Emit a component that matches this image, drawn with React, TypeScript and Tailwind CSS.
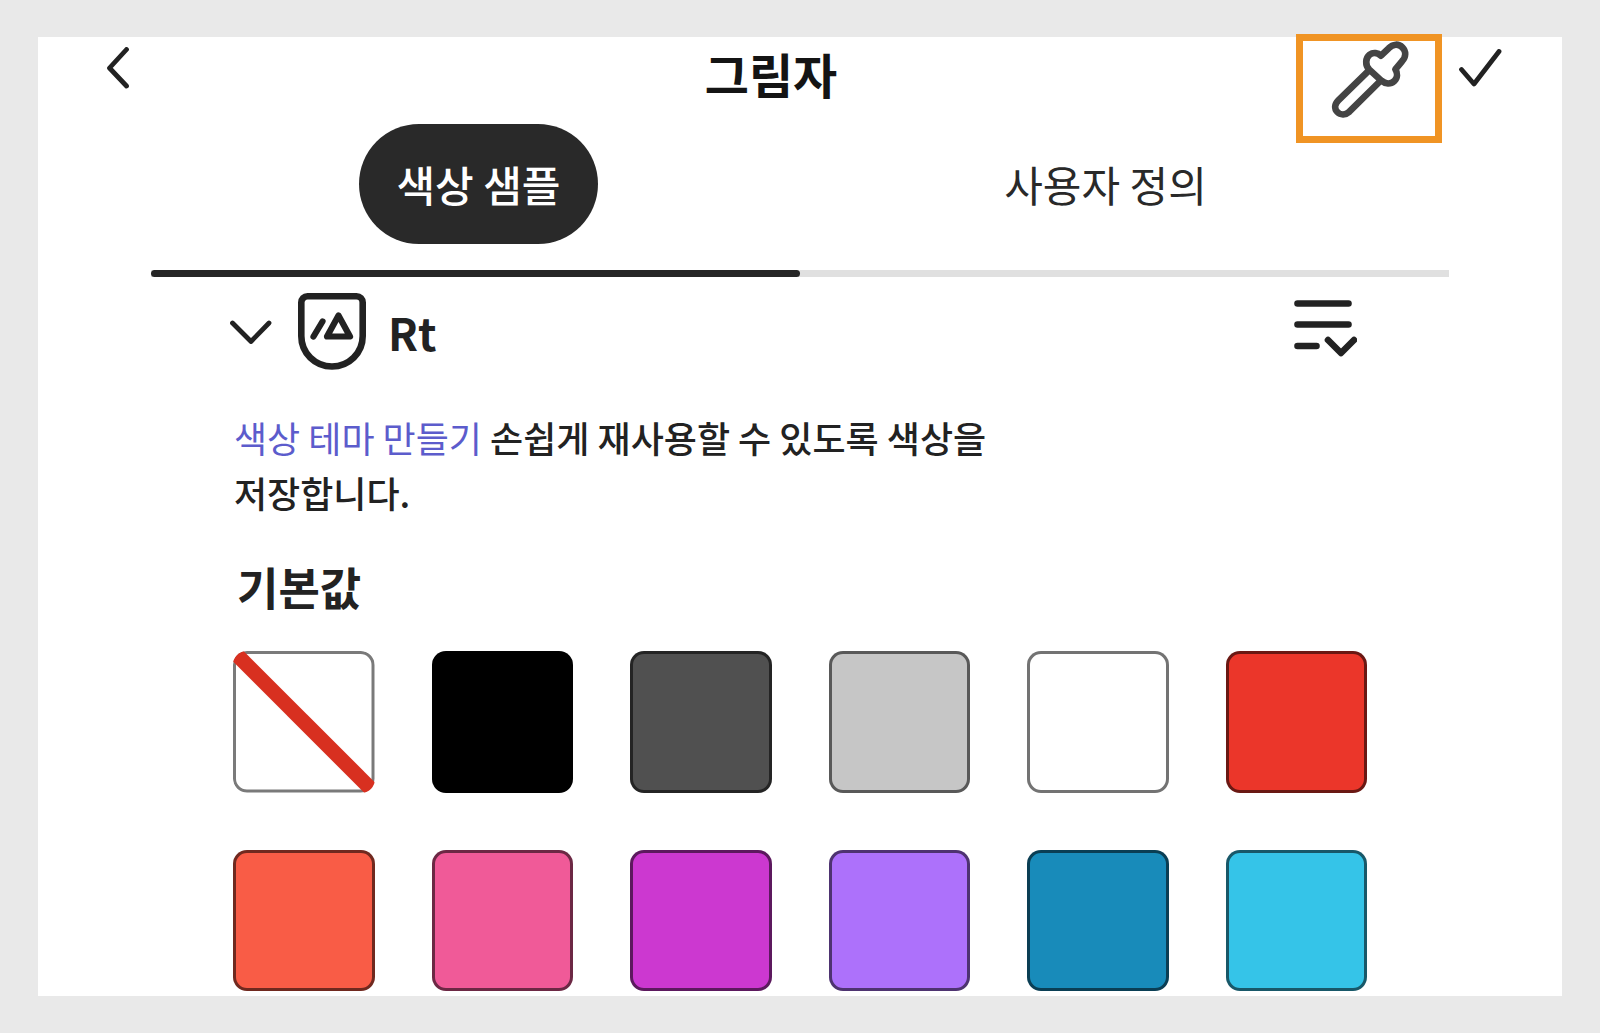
import React, { useState } from 'react';

type Swatch = {
  name: string;
  color: string;
};

type Tab = {
  id: string;
  label: string;
};

const TABS: Tab[] = [
  { id: 'swatches', label: '색상 샘플' },
  { id: 'custom', label: '사용자 정의' }
];

const SWATCHES: Swatch[] = [
  { name: '없음', color: '' },
  { name: '검정', color: 'bg-black' },
  { name: '진한 회색', color: 'bg-[#505050]' },
  { name: '연한 회색', color: 'bg-[#c6c6c6]' },
  { name: '흰색', color: 'bg-white' },
  { name: '빨강', color: 'bg-[#eb362a]' },
  { name: '주황', color: 'bg-[#f95c46]' },
  { name: '분홍', color: 'bg-[#f05a98]' },
  { name: '자홍', color: 'bg-[#cc38d0]' },
  { name: '보라', color: 'bg-[#ad71fb]' },
  { name: '파랑', color: 'bg-[#188bba]' },
  { name: '하늘', color: 'bg-[#35c4e8]' }
];

const BackIcon = () => (
  <svg width="22" height="42" viewBox="0 0 22 42" fill="none" stroke="currentColor" strokeWidth="4.8" strokeLinecap="round" strokeLinejoin="round">
    <path d="M19.5 2.5L2.5 21L19.5 39" />
  </svg>
);

const EyedropperIcon = () => (
  <svg width="80" height="77" viewBox="147 61 240 231" fill="none" stroke="currentColor" strokeWidth="20" strokeLinejoin="round">
    <path d="M268 147C255 134 256 112 269 102C280 94 294 97 303 105L326 83C339 69 356 69 367 80C379 92 378 109 366 122L346 146C353 157 353 172 343 181C332 191 316 190 304 180Z" />
    <path d="M264 152L175 239C163 251 163 265 172 274C182 284 197 283 208 273L298 184" />
  </svg>
);

const CheckIcon = () => (
  <svg width="43" height="38" viewBox="0 0 43 38" fill="none" stroke="currentColor" strokeWidth="4.8" strokeLinecap="round" strokeLinejoin="round">
    <path d="M2.5 20.5L15 35L40 2.5" />
  </svg>
);

const ExpandIcon = () => (
  <svg width="42" height="24" viewBox="0 0 42 24" fill="none" stroke="currentColor" strokeWidth="4.8" strokeLinecap="round" strokeLinejoin="round">
    <path d="M2.5 3L21 21.5L39 3" />
  </svg>
);

const BrandIcon = () => (
  <svg width="68" height="77" viewBox="0 0 68 77" fill="none" stroke="currentColor" strokeLinecap="round" strokeLinejoin="round">
    <path strokeWidth="6.6" d="M9.5 3.3H58.5C62 3.3 64.7 6 64.7 9.5V43C64.7 60 51 73.5 34 73.5C17 73.5 3.3 60 3.3 43V9.5C3.3 6 6 3.3 9.5 3.3Z" />
    <path strokeWidth="6.2" d="M24.5 28.5L15.5 43.5" />
    <path strokeWidth="6.2" d="M40.5 22.5L52 43.5H29Z" />
  </svg>
);

const ListIcon = () => (
  <svg width="63" height="57" viewBox="0 0 63 57" fill="none" stroke="currentColor" strokeWidth="6.6" strokeLinecap="round" strokeLinejoin="round">
    <path d="M3.5 3.5H54.5M3.5 24.5H54.5M3.5 46H22.5" />
    <path d="M34 40L47 53L60 40" />
  </svg>
);

const NoColorIcon = () => (
  <svg className="w-full h-full" viewBox="0 0 142 142" fill="none">
    <rect x="1.5" y="1.5" width="139" height="139" rx="12.5" stroke="#7a7a7a" strokeWidth="3" />
    <path d="M0 0L142 142" stroke="#d83020" strokeWidth="15" />
  </svg>
);

const App: React.FC = () => {
  const [activeTab, setActiveTab] = useState('swatches');

  return (
    <div className="min-h-screen bg-[#e9e9e9] px-[38px] py-[37px] text-[#222222] font-['Noto_Sans_CJK_KR',sans-serif]">
      <main className="bg-white pb-[5px]">
        <header className="flex items-start h-[87px] pl-[69px] pr-[60px]">
          <button aria-label="뒤로" className="w-[139px] pt-2.5">
            <BackIcon />
          </button>
          <h1 className="flex-1 text-center text-[48px] leading-[72px] font-bold text-[#141414]">그림자</h1>
          <button
            aria-label="스포이드"
            className="flex justify-center items-start -mt-[3px] w-[146px] h-[109px] border-7 border-[#f09424] text-[#444444]"
          >
            <EyedropperIcon />
          </button>
          <button aria-label="완료" className="pl-[17px] pt-3">
            <CheckIcon />
          </button>
        </header>

        {/* Tabs */}
        <div role="tablist" className="grid grid-cols-2 justify-items-center pl-[127px] pr-[143px]">
          {TABS.map((tab) => (
            <button
              key={tab.id}
              role="tab"
              aria-selected={activeTab === tab.id}
              onClick={() => setActiveTab(tab.id)}
              className={`h-[120px] px-[37px] rounded-full text-[42px] leading-[60px] ${
                activeTab === tab.id ? 'bg-[#292929] text-white font-medium' : 'text-[#292929]'
              }`}
            >
              {tab.label}
            </button>
          ))}
        </div>
        <div className="mt-[26px] mx-[113px] grid grid-cols-2 h-[7px] bg-[#e0e0e0]">
          <div className={`rounded-full bg-[#262626] ${activeTab === 'custom' ? 'col-start-2' : ''}`} />
        </div>

        {/* Library */}
        <section className="px-[195px]">
          <div className="mt-4 flex items-center justify-between pr-2.5">
            <button className="-ml-[3px] flex items-center">
              <ExpandIcon />
              <span className="ml-[26px]">
                <BrandIcon />
              </span>
              <span className="ml-[22px] text-[44px] leading-[60px] font-bold">Rt</span>
            </button>
            <button aria-label="목록 옵션" className="pb-1.5">
              <ListIcon />
            </button>
          </div>

          <p className="mt-10 pl-px break-keep text-[36px] leading-[55px] font-medium">
            <a href="#theme" className="font-normal text-[#5c5ccc]">색상 테마 만들기</a> 손쉽게 재사용할 수 있도록 색상을
            <br />
            저장합니다.
          </p>
        </section>

        {/* Default swatches */}
        <section className="px-[195px]">
          <h2 className="mt-[34px] pl-1 text-[45px] leading-[66px] font-bold">기본값</h2>
          <div className="mt-[31px] grid grid-cols-6 gap-[57px]">
            {SWATCHES.map((swatch) =>
              swatch.color ? (
                <button
                  key={swatch.name}
                  aria-label={swatch.name}
                  className={`aspect-square rounded-[14px] border-3 border-black/55 ${swatch.color}`}
                />
              ) : (
                <button key={swatch.name} aria-label={swatch.name} className="aspect-square rounded-[14px] overflow-hidden">
                  <NoColorIcon />
                </button>
              )
            )}
          </div>
        </section>
      </main>
    </div>
  );
};

export default App;
